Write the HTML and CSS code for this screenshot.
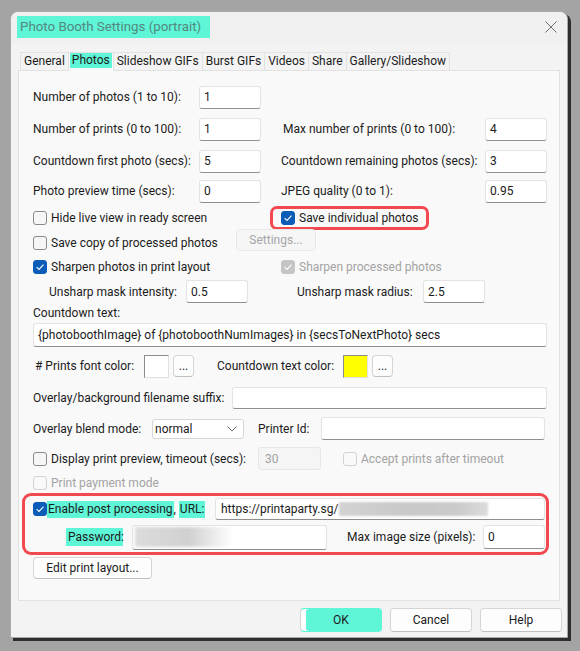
FILE: index.html
```html
<!DOCTYPE html>
<html>
<head>
    <meta charset="UTF-8">
    <meta name="viewport" content="width=device-width, initial-scale=1.0">
    <title>Photo Booth Settings (portrait)</title>
    <link rel="stylesheet" href="styles.css">
</head>
<body>
<div class="dialog">
    <div class="titlebar">
        <span class="title">Photo Booth Settings (portrait)</span>
        <svg class="close" width="12" height="12" viewBox="0 0 12 12"><path d="M0.5 0.5L11.5 11.5M11.5 0.5L0.5 11.5" stroke="#707070" stroke-width="1" fill="none"/></svg>
    </div>

    <div class="tabs">
        <div class="tab">General</div>
        <div class="tab active"><span class="hl">Photos</span></div>
        <div class="tab">Slideshow GIFs</div>
        <div class="tab">Burst GIFs</div>
        <div class="tab">Videos</div>
        <div class="tab">Share</div>
        <div class="tab">Gallery/Slideshow</div>
    </div>

    <div class="panel">
        <div class="row h32">
            <div class="col"><span class="lbl w166">Number of photos (1 to 10):</span><div class="field w62">1</div></div>
        </div>
        <div class="row h32">
            <div class="col"><span class="lbl w166">Number of prints (0 to 100):</span><div class="field w62">1</div></div>
            <div class="col-r"><span class="lbl w204 pl2">Max number of prints (0 to 100):</span><div class="field w62">4</div></div>
        </div>
        <div class="row h32">
            <div class="col"><span class="lbl w166">Countdown first photo (secs):</span><div class="field w62">5</div></div>
            <div class="col-r"><span class="lbl w204">Countdown remaining photos (secs):</span><div class="field w62">3</div></div>
        </div>
        <div class="row h28">
            <div class="col"><span class="lbl w166">Photo preview time (secs):</span><div class="field w62">0</div></div>
            <div class="col-r"><span class="lbl w204">JPEG quality (0 to 1):</span><div class="field w62">0.95</div></div>
        </div>

        <div class="row h26">
            <div class="col"><span class="check"><span class="cb"></span>Hide live view in ready screen</span></div>
            <div class="col-r">
                <span class="mark">
                    <span class="check"><span class="cb on"><svg width="12" height="12" viewBox="0 0 12 12"><path d="M2.6 6.2L5 8.5L9.5 3.7" stroke="#fff" stroke-width="1.1" fill="none"/></svg></span>Save individual photos</span>
                </span>
            </div>
        </div>
        <div class="row h24">
            <span class="check w203"><span class="cb"></span>Save copy of processed photos</span>
            <div class="btn dis settings">Settings...</div>
        </div>
        <div class="row h23">
            <div class="col"><span class="check"><span class="cb on"><svg width="12" height="12" viewBox="0 0 12 12"><path d="M2.6 6.2L5 8.5L9.5 3.7" stroke="#fff" stroke-width="1.1" fill="none"/></svg></span>Sharpen photos in print layout</span></div>
            <div class="col-r"><span class="check dim"><span class="cb on dis"><svg width="12" height="12" viewBox="0 0 12 12"><path d="M2.6 6.2L5 8.5L9.5 3.7" stroke="#fff" stroke-width="1.1" fill="none"/></svg></span>Sharpen processed photos</span></div>
        </div>
        <div class="row h27">
            <div class="col pl16"><span class="lbl w137">Unsharp mask intensity:</span><div class="field w62">0.5</div></div>
            <div class="col-r pl16"><span class="lbl w126">Unsharp mask radius:</span><div class="field w62">2.5</div></div>
        </div>
        <div class="row h15">
            <span class="lbl">Countdown text:</span>
        </div>
        <div class="row h30">
            <div class="field w514 tall">{photoboothImage} of {photoboothNumImages} in {secsToNextPhoto} secs</div>
        </div>
        <div class="row h32">
            <span class="lbl w109 ml2"># Prints font color:</span>
            <span class="swatch"></span>
            <div class="btn dots">...</div>
            <span class="lbl w126 ml23">Countdown text color:</span>
            <span class="swatch yellow"></span>
            <div class="btn dots">...</div>
        </div>
        <div class="row h31">
            <span class="lbl w199">Overlay/background filename suffix:</span>
            <div class="field w315 short"></div>
        </div>
        <div class="row h31">
            <span class="lbl w119">Overlay blend mode:</span>
            <div class="select">normal<svg width="10" height="6" viewBox="0 0 10 6"><path d="M0.5 0.5L5 5L9.5 0.5" stroke="#6a6a6a" stroke-width="1" fill="none"/></svg></div>
            <span class="lbl w63 ml14">Printer Id:</span>
            <div class="field w224"></div>
        </div>
        <div class="row h29">
            <span class="check w225"><span class="cb"></span>Display print preview, timeout (secs):</span>
            <div class="field w63 off">30</div>
            <span class="check dim ml22"><span class="cb dis"></span>Accept prints after timeout</span>
        </div>
        <div class="row h20">
            <span class="check dim"><span class="cb dis"></span>Print payment mode</span>
        </div>

        <div class="mark-box">
            <div class="row h26">
                <span class="check"><span class="cb on flush"><svg width="12" height="12" viewBox="0 0 12 12"><path d="M2.6 6.2L5 8.5L9.5 3.7" stroke="#fff" stroke-width="1.1" fill="none"/></svg></span><span class="hl">Enable post processing</span>,&nbsp;<span class="hl">URL:</span></span>
                <div class="field w330 url">https://printaparty.sg/<span class="blur"></span></div>
            </div>
            <div class="row h30">
                <span class="hl pass">Password:</span>
                <div class="field w195 pwd"><span class="blur-pwd"></span></div>
                <span class="lbl w136 ml20">Max image size (pixels):</span>
                <div class="field w62 h24">0</div>
            </div>
        </div>

        <div class="row h26">
            <div class="btn edit">Edit print layout...</div>
        </div>
    </div>

    <div class="footer">
        <div class="btn big ok">OK</div>
        <div class="btn big">Cancel</div>
        <div class="btn big">Help</div>
    </div>
</div>
</body>
</html>
```

FILE: styles.css
```css
html, body {
    margin: 0;
    height: 651px;
    overflow: hidden;
}
body {
    background: #a4a4a4;
    padding: 11px 0 0 10px;
    box-sizing: border-box;
    font-family: Roboto, "Noto Sans", sans-serif;
    font-size: 12px;
    color: #1b1b1b;
}
.dialog {
    width: 558px;
    height: 627px;
    box-sizing: border-box;
    background: #f3f3f3;
    border: 1px solid #a9a9a9;
    border-radius: 8px 8px 0 0;
    box-shadow: 3px 3px 0 #2e2e2e;
    display: flex;
    flex-direction: column;
}
.titlebar {
    height: 32px;
    flex: none;
    display: flex;
    align-items: center;
    justify-content: space-between;
    padding: 0 10px 0 6px;
    background: #f0f0f0;
    border-radius: 8px 8px 0 0;
}
.title {
    background: #5ff5d7;
    color: #54877d;
    font-size: 13.3px;
    height: 22px;
    line-height: 22px;
    padding: 0 9px 0 3px;
    margin-top: -2px;
}
.close {
    margin-top: -3px;
}
.hl {
    background: #5ff5d7;
}

/* tabs */
.tabs {
    display: flex;
    flex: none;
    padding: 8px 0 0 9px;
    height: 18px;
}
.tab {
    height: 18px;
    line-height: 17px;
    padding: 0 3px;
    box-sizing: border-box;
    border: 1px solid #e2e2e2;
    border-bottom: none;
    margin-right: -1px;
    background: #f3f3f3;
    white-space: nowrap;
}
.tab.active {
    height: 19px;
    margin-bottom: -1px;
    padding: 0 1px;
    background: #f9f9f9;
    position: relative;
    z-index: 1;
}
.tab.active .hl {
    display: block;
    height: 15px;
    line-height: 15px;
    padding: 0 2px;
}

/* panel */
.panel {
    margin: 0 7px;
    flex: none;
    background: #f9f9f9;
    border: 1px solid #e2e2e2;
    padding: 10px 0 19px 14px;
}
.row {
    display: flex;
    align-items: center;
    white-space: nowrap;
}
.h15 { height: 15px; }
.h20 { height: 20px; }
.h23 { height: 23px; }
.h24 { height: 24px; }
.h26 { height: 26px; }
.h27 { height: 27px; }
.h28 { height: 28px; }
.h29 { height: 29px; }
.h30 { height: 30px; }
.h31 { height: 31px; }
.h32 { height: 32px; }
.col {
    width: 248px;
    flex: none;
    display: flex;
    align-items: center;
    box-sizing: border-box;
}
.col-r {
    display: flex;
    align-items: center;
    box-sizing: border-box;
}
.pl16 { padding-left: 16px; }
.pl2 { padding-left: 2px; box-sizing: border-box; }
.ml2 { margin-left: 2px; }
.ml14 { margin-left: 14px; }
.ml20 { margin-left: 20px; }
.ml22 { margin-left: 22px; }
.ml23 { margin-left: 23px; }
.lbl {
    flex: none;
    display: inline-block;
}
.w62 { width: 62px; }
.w63 { width: 63px; }
.w109 { width: 109px; }
.w119 { width: 119px; }
.w126 { width: 126px; }
.w136 { width: 136px; }
.w137 { width: 137px; }
.w166 { width: 166px; }
.w195 { width: 195px; }
.w199 { width: 199px; }
.w203 { width: 203px; }
.w204 { width: 204px; }
.w224 { width: 224px; }
.w225 { width: 225px; }
.w315 { width: 315px; }
.w330 { width: 330px; }
.w514 { width: 514px; }

/* inputs */
.field {
    flex: none;
    height: 23px;
    box-sizing: border-box;
    background: #fff;
    border: 1px solid #e3e3e3;
    border-bottom-color: #8f8f8f;
    border-radius: 3px;
    padding: 0 0 0 4px;
    display: flex;
    align-items: center;
    overflow: hidden;
}
.field.tall { height: 24px; }
.field.short { height: 22px; }
.field.h24 { height: 24px; }
.field.off {
    background: #f5f5f5;
    border-color: #e6e6e6;
    color: #a3a3a3;
    padding-left: 6px;
}
.field.url {
    height: 22px;
    margin-left: auto;
    padding-left: 5px;
}
.field.pwd {
    height: 25px;
    margin-left: 9px;
    padding-left: 2px;
}
.blur {
    width: 149px;
    height: 14px;
    margin-left: 1px;
    background: linear-gradient(90deg, #d3d3d3, #c8c8c8 45%, #cbcbcb 80%, #dcdcdc);
    filter: blur(1px);
}
.blur-pwd {
    width: 98px;
    height: 20px;
    background: linear-gradient(90deg, #dcdcdc, #d0d0d0 55%, #ffffff);
    filter: blur(1.5px);
}
.select {
    flex: none;
    width: 92px;
    height: 20px;
    box-sizing: border-box;
    background: #fff;
    border: 1px solid #d6d6d6;
    border-radius: 3px;
    display: flex;
    align-items: center;
    justify-content: space-between;
    padding: 0 6px 0 2px;
}
.swatch {
    flex: none;
    width: 25px;
    height: 23px;
    box-sizing: border-box;
    border: 1px solid;
    border-color: #8c8c8c #e0e0e0 #e0e0e0 #8c8c8c;
    background: #fff;
}
.swatch.yellow { background: #ffff00; }

/* checkboxes */
.check {
    display: flex;
    align-items: center;
    flex: none;
}
.check.dim { color: #a3a3a3; }
.cb {
    width: 14px;
    height: 14px;
    box-sizing: border-box;
    border: 1px solid #8a8a8a;
    border-radius: 3px;
    background: #f6f6f6;
    margin-right: 4px;
    flex: none;
    display: flex;
    align-items: center;
    justify-content: center;
}
.cb.on {
    background: #0a5cb6;
    border-color: #0a5cb6;
}
.cb.dis {
    border-color: #d2d2d2;
    background: #f9f9f9;
}
.cb.on.dis {
    background: #c5c5c5;
    border-color: #c5c5c5;
}
.cb.flush { margin-right: 0; }

/* annotations */
.mark {
    display: flex;
    align-items: center;
    border: 3px solid #f1494f;
    border-radius: 7px;
    padding: 2px 8px;
    margin-left: -11px;
}
.mark-box {
    width: 527px;
    height: 62px;
    box-sizing: border-box;
    border: 3px solid #f1494f;
    border-radius: 9px;
    margin-left: -11px;
    padding: 0 1px 0 8px;
}
.check .hl {
    height: 17px;
    line-height: 17px;
    padding: 0 1px;
}
.pass {
    margin-left: 33px;
    width: 57px;
    height: 18px;
    line-height: 18px;
    padding-left: 2px;
    box-sizing: border-box;
    flex: none;
}

/* buttons */
.btn {
    flex: none;
    height: 22px;
    box-sizing: border-box;
    background: #fdfdfd;
    border: 1px solid #d5d5d5;
    border-bottom-color: #c0c0c0;
    border-radius: 4px;
    display: flex;
    align-items: center;
    justify-content: center;
}
.btn.dis {
    background: #f6f6f6;
    border-color: #e8e8e8;
    color: #a6a6a6;
}
.settings {
    width: 80px;
    margin-bottom: 6px;
}
.dots {
    width: 21px;
    margin-left: 4px;
}
.edit {
    width: 119px;
}
.footer {
    flex: 1;
    display: flex;
    justify-content: flex-end;
    gap: 8px;
    padding: 7px 5px 0 0;
}
.btn.big {
    width: 82px;
    height: 24px;
}
.btn.ok {
    background: #5ff5d7;
    border-color: #5ff5d7;
    border-left-color: #d5d5d5;
    box-shadow: inset 5px 0 0 #fdfdfd;
}
```
